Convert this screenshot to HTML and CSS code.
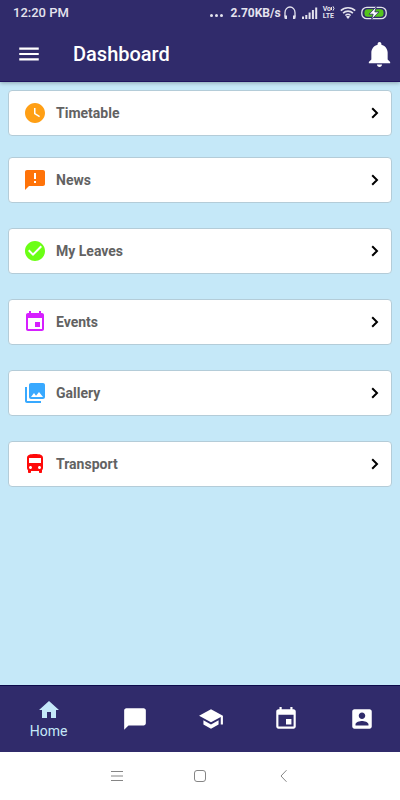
FILE: index.html
```html
<!DOCTYPE html>
<html lang="en">
<head>
    <meta charset="UTF-8">
    <meta name="viewport" content="width=device-width, initial-scale=1.0">
    <title>Dashboard</title>
    <link rel="stylesheet" href="styles.css">
</head>
<body>
    <header class="header">
        <div class="status-bar">
            <span class="status-time">12:20 PM</span>
            <span class="status-dots"><i></i><i></i><i></i></span>
            <span class="status-speed">2.70KB/s</span>
            <svg class="headset" width="14" height="14" viewBox="0 0 14 14" aria-hidden="true">
                <path d="M2 10.5V6.5a5 5.5 0 0 1 10 0v4" fill="none" stroke="#e4e3ee" stroke-width="1.3"/>
                <path d="M1.4 9.5H4V13H2.6A1.2 1.2 0 0 1 1.4 11.8zM10 9.5h2.6v2.3a1.2 1.2 0 0 1-1.2 1.2H10z" fill="#e4e3ee"/>
            </svg>
            <svg class="signal" width="16" height="12" viewBox="0 0 16 12" aria-hidden="true">
                <path d="M0 9.5h2V12H0zM3.3 8h2v4h-2zM6.6 5.5h2V12h-2zM9.9 3h2v9h-2zM13.2 0.5h2V12h-2z" fill="#e4e3ee"/>
            </svg>
            <span class="volte"><span>Vo<svg width="4" height="5" viewBox="0 0 4 5" aria-hidden="true"><path d="M0.5 1v3M2 0.3q2 2.2 0 4.4" fill="none" stroke="#e4e3ee"/></svg></span><span>LTE</span></span>
            <svg class="wifi" width="16" height="13" viewBox="0 0 16 13" aria-hidden="true">
                <path d="M0.8 4.6a10.4 10.4 0 0 1 14.4 0M3.1 7.1a7 7 0 0 1 9.8 0M5.4 9.5a3.8 3.8 0 0 1 5.2 0" fill="none" stroke="#e4e3ee" stroke-width="1.6"/>
                <path d="M8 13l-2-2.4a3 3 0 0 1 4 0z" fill="#e4e3ee"/>
            </svg>
            <svg class="battery" width="26" height="14" viewBox="0 0 26 14" aria-hidden="true">
                <rect x="0.8" y="1.3" width="24.4" height="11.4" rx="5" fill="none" stroke="#e4e3ee" stroke-width="1.3"/>
                <rect x="3.5" y="3.2" width="19" height="7.6" rx="3" fill="#54c41c"/>
                <path d="M15.5 0.5L8 8.2h4.2L10.4 13.5 18 5.9h-4.2z" fill="#fff" stroke="#302b6b" stroke-width="0.8"/>
            </svg>
        </div>
        <div class="toolbar">
            <button class="icon-button" aria-label="Menu">
                <svg width="26" height="26" viewBox="0 0 24 24"><path d="M3 18h18v-2H3v2zm0-5h18v-2H3v2zm0-7v2h18V6H3z"/></svg>
            </button>
            <h1>Dashboard</h1>
            <button class="icon-button" aria-label="Notifications">
                <svg width="31" height="31" viewBox="0 0 512 512"><path d="M256 464c22.779 0 41.411-18.719 41.411-41.6h-82.823c0 22.881 18.633 41.6 41.412 41.6zm134.589-124.8V224.8c0-63.44-44.516-117.518-103.53-131.041V79.2c0-17.682-13.457-31.2-31.059-31.2s-31.059 13.518-31.059 31.2v14.559c-59.015 13.523-103.53 67.601-103.53 131.041v114.4L80 380.8v20.8h352v-20.8l-41.411-41.6z"/></svg>
            </button>
        </div>
    </header>

    <main class="menu">
        <a class="card timetable" href="#timetable">
            <svg class="card-icon" viewBox="0 0 24 24"><path d="M12 2C6.5 2 2 6.5 2 12s4.5 10 10 10 10-4.5 10-10S17.5 2 12 2zm4.2 14.2L11 13V7h1.5v5.2l4.5 2.7-.8 1.3z"/></svg>
            <span>Timetable</span>
            <svg class="chevron" viewBox="0 0 8 12"><path d="M1.2 1.2L6 6l-4.8 4.8"/></svg>
        </a>
        <a class="card news" href="#news">
            <svg class="card-icon" viewBox="0 0 24 24"><path d="M20 2H4c-1.1 0-1.99.9-1.99 2L2 22l4-4h14c1.1 0 2-.9 2-2V4c0-1.1-.9-2-2-2zm-7 13h-2v-2h2v2zm0-4h-2V5h2v6z"/></svg>
            <span>News</span>
            <svg class="chevron" viewBox="0 0 8 12"><path d="M1.2 1.2L6 6l-4.8 4.8"/></svg>
        </a>
        <a class="card leaves" href="#leaves">
            <svg class="card-icon" viewBox="0 0 24 24"><path d="M12 2C6.48 2 2 6.48 2 12s4.48 10 10 10 10-4.48 10-10S17.52 2 12 2zm-2 15l-5-5 1.41-1.41L10 14.17l7.59-7.59L19 8l-9 9z"/></svg>
            <span>My Leaves</span>
            <svg class="chevron" viewBox="0 0 8 12"><path d="M1.2 1.2L6 6l-4.8 4.8"/></svg>
        </a>
        <a class="card events" href="#events">
            <svg class="card-icon" viewBox="0 0 24 24"><path d="M17 12h-5v5h5v-5zM16 1v2H8V1H6v2H5c-1.11 0-1.99.9-1.99 2L3 19c0 1.1.89 2 2 2h14c1.1 0 2-.9 2-2V5c0-1.1-.9-2-2-2h-1V1h-2zm3 18H5V8h14v11z"/></svg>
            <span>Events</span>
            <svg class="chevron" viewBox="0 0 8 12"><path d="M1.2 1.2L6 6l-4.8 4.8"/></svg>
        </a>
        <a class="card gallery" href="#gallery">
            <svg class="card-icon" viewBox="0 0 24 24"><path d="M22 16V4c0-1.1-.9-2-2-2H8c-1.1 0-2 .9-2 2v12c0 1.1.9 2 2 2h12c1.1 0 2-.9 2-2zm-11-4l2.03 2.71L16 11l4 5H8l3-4zM2 6v14c0 1.1.9 2 2 2h14v-2H4V6H2z"/></svg>
            <span>Gallery</span>
            <svg class="chevron" viewBox="0 0 8 12"><path d="M1.2 1.2L6 6l-4.8 4.8"/></svg>
        </a>
        <a class="card transport" href="#transport">
            <svg class="card-icon" viewBox="0 0 24 24"><path d="M4 16c0 .88.39 1.67 1 2.22V20c0 .55.45 1 1 1h1c.55 0 1-.45 1-1v-1h8v1c0 .55.45 1 1 1h1c.55 0 1-.45 1-1v-1.78c.61-.55 1-1.34 1-2.22V6c0-3.5-3.58-4-8-4s-8 .5-8 4v10zm3.5 1c-.83 0-1.5-.67-1.5-1.5S6.67 14 7.5 14s1.5.67 1.5 1.5S8.33 17 7.5 17zm9 0c-.83 0-1.5-.67-1.5-1.5s.67-1.5 1.5-1.5 1.5.67 1.5 1.5-.67 1.5-1.5 1.5zm1.5-6H6V6h12v5z"/></svg>
            <span>Transport</span>
            <svg class="chevron" viewBox="0 0 8 12"><path d="M1.2 1.2L6 6l-4.8 4.8"/></svg>
        </a>
    </main>

    <nav class="tabs">
        <a class="tab active" href="#home">
            <svg viewBox="0 0 24 24"><path d="M10 20v-6h4v6h5v-8h3L12 3 2 12h3v8z"/></svg>
            <span>Home</span>
        </a>
        <a class="tab" href="#messages" aria-label="Messages">
            <svg viewBox="0 0 24 24"><path d="M20 2H4c-1.1 0-2 .9-2 2v18l4-4h14c1.1 0 2-.9 2-2V4c0-1.1-.9-2-2-2z"/></svg>
        </a>
        <a class="tab" href="#school" aria-label="School">
            <svg viewBox="0 0 24 24"><path d="M5 13.18v4L12 21l7-3.82v-4L12 17l-7-3.82zM12 3L1 9l11 6 9-4.91V17h2V9L12 3z"/></svg>
        </a>
        <a class="tab" href="#calendar" aria-label="Calendar">
            <svg viewBox="0 0 24 24"><path d="M17 12h-5v5h5v-5zM16 1v2H8V1H6v2H5c-1.11 0-1.99.9-1.99 2L3 19c0 1.1.89 2 2 2h14c1.1 0 2-.9 2-2V5c0-1.1-.9-2-2-2h-1V1h-2zm3 18H5V8h14v11z"/></svg>
        </a>
        <a class="tab" href="#profile" aria-label="Profile">
            <svg viewBox="0 0 24 24"><path d="M3 5v14c0 1.1.89 2 2 2h14c1.1 0 2-.9 2-2V5c0-1.1-.9-2-2-2H5c-1.11 0-2 .9-2 2zm12 4c0 1.66-1.34 3-3 3s-3-1.34-3-3 1.34-3 3-3 3 1.34 3 3zm-9 8c0-2 4-3.1 6-3.1s6 1.1 6 3.1v1H6v-1z"/></svg>
        </a>
    </nav>

    <!-- Android system keys -->
    <div class="system-keys">
        <button aria-label="Recent apps">
            <svg width="12" height="12" viewBox="0 0 12 12"><path d="M0 1.5h12M0 6h12M0 10.5h12"/></svg>
        </button>
        <button aria-label="Home screen">
            <svg width="12" height="12" viewBox="0 0 12 12"><rect x="0.5" y="0.5" width="11" height="11" rx="2.5"/></svg>
        </button>
        <button aria-label="Back">
            <svg width="12" height="12" viewBox="0 0 12 12"><path d="M9.5 0.2L4 6l5.5 5.8"/></svg>
        </button>
    </div>
</body>
</html>
```
FILE: styles.css
```css
* {
    box-sizing: border-box;
}
body {
    font-family: Roboto, sans-serif;
    margin: 0;
    min-height: 100vh;
    display: flex;
    flex-direction: column;
    background-color: #c5e8f8;
}
a {
    text-decoration: none;
}
button {
    display: flex;
    padding: 0;
    border: none;
    background: none;
    cursor: pointer;
}
.header {
    background-color: #302b6b;
    border-bottom: 1px solid #20135f;
    box-shadow: 0 1px 4px rgba(0,0,0,0.3);
}
.status-bar {
    display: flex;
    align-items: center;
    height: 25px;
    padding: 0 13px;
    color: #e4e3ee;
    font-size: 12px;
    font-weight: bold;
}
.status-time {
    font-size: 13px;
    font-weight: 500;
}
.status-dots {
    display: flex;
    gap: 2px;
    margin: 6px 8px 0 auto;
}
.status-dots i {
    width: 3px;
    height: 3px;
    border-radius: 50%;
    background-color: #e4e3ee;
}
.headset {
    margin: 0 5px 0 2px;
}
.volte {
    display: flex;
    flex-direction: column;
    margin: 0 5px;
    font-size: 7px;
    line-height: 7px;
}
.battery {
    margin-left: 5px;
}
.toolbar {
    display: flex;
    align-items: center;
    height: 56px;
    padding: 2px 5px 0 16px;
}
.toolbar h1 {
    flex: 1;
    margin: 0 0 0 31px;
    color: #fff;
    font-size: 20px;
    font-weight: 500;
}
.icon-button svg {
    fill: #fff;
}
.menu {
    flex: 1;
    padding: 8px 8px 0;
}
.card {
    display: flex;
    align-items: center;
    height: 46px;
    margin-bottom: 25px;
    padding: 0 12px 0 14px;
    background-color: #fff;
    border: 1px solid #b4ccd8;
    border-radius: 4px;
    color: #626262;
    font-size: 14px;
    font-weight: bold;
}
.card:first-child {
    margin-bottom: 21px;
}
.card span {
    flex: 1;
    margin-left: 9px;
}
.card-icon {
    width: 24px;
    height: 24px;
    fill: currentColor;
}
.timetable .card-icon {
    color: #ff9f15;
}
.news .card-icon {
    color: #ff7309;
}
.leaves .card-icon {
    color: #6bff15;
}
.events .card-icon {
    color: #d61fff;
}
.gallery .card-icon {
    color: #38a9ff;
}
.transport .card-icon {
    color: #ff0a0a;
}
.chevron {
    width: 8px;
    height: 12px;
    fill: none;
    stroke: #000;
    stroke-width: 2;
}
.tabs {
    display: flex;
    height: 67px;
    background-color: #302b6b;
    border-top: 1px solid #0d0a4a;
}
.tab {
    flex: 1;
    display: flex;
    flex-direction: column;
    align-items: center;
    justify-content: center;
    color: #fff;
    font-size: 14px;
    line-height: 18px;
}
.tab svg {
    width: 26px;
    height: 26px;
    fill: currentColor;
}
.tab.active {
    flex: 0 0 97px;
    color: #c5e8f8;
}
.tab.active svg {
    width: 24px;
    height: 24px;
}
.system-keys {
    display: flex;
    align-items: center;
    justify-content: center;
    gap: 71px;
    height: 48px;
    background-color: #fff;
}
.system-keys svg {
    fill: none;
    stroke: #858585;
}
```
